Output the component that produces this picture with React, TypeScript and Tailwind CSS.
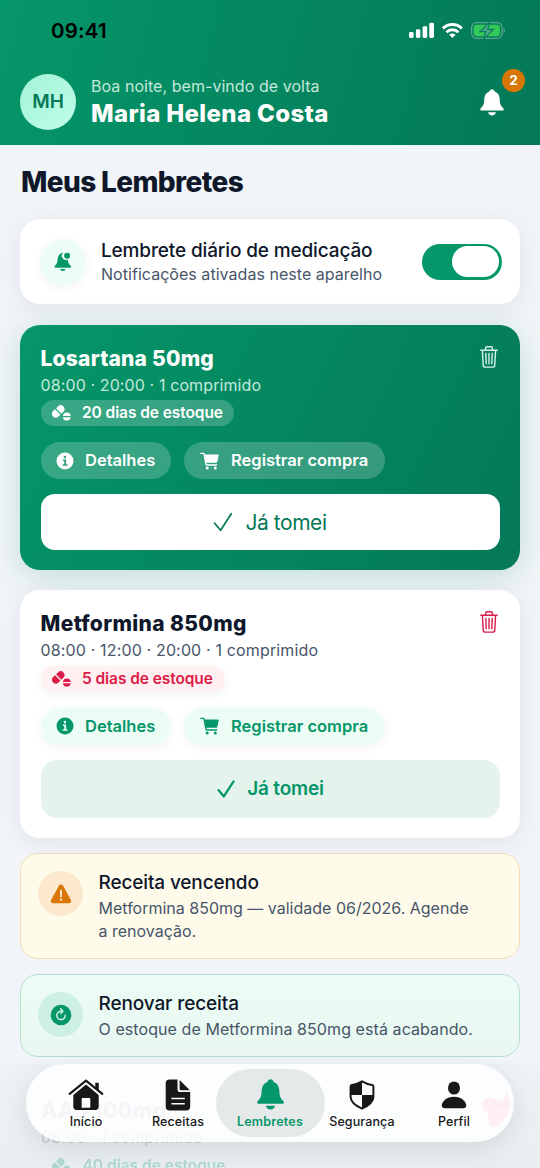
import React from "react";

type IconProps = { className?: string };

const Bell = ({ className }: IconProps) => (
  <svg viewBox="0 0 24 27" fill="currentColor" className={className}>
    <path d="M12 0.3c1.4 0 2.4 1 2.7 2.3 3.2 1.1 4.9 3.9 5 7.6.1 4.300.8 6.500 3.400 8.900 1.100 1.100.7 2.500-.9 2.500H1.800c-1.600 0-2-1.400-.9-2.500 2.600-2.400 3.300-4.600 3.400-8.900.1-3.700 1.800-6.500 5-7.600C9.600 1.300 10.600.3 12 .3z" />
    <path d="M8 23.300h8c-.5 1.900-2 3.200-4 3.200s-3.500-1.300-4-3.200z" />
  </svg>
);

const BellBadge = ({ className }: IconProps) => (
  <svg viewBox="0 0 18 19" fill="currentColor" className={className}>
    <path d="M9.300.7A4.100 4.100 0 0 0 13.800 7.500c.3 3 .8 4.500 2.900 6.300.9.9.6 1.900-.6 1.900H1.600c-1.200 0-1.500-1-.6-1.900C3 12 3.400 10.400 3.600 7.600 3.800 4 5.500 1.200 9.300.7z" />
    <path d="M6 17h5.600c-.4 1.200-1.400 2-2.800 2S6.400 18.200 6 17z" />
    <circle cx="13.100" cy="3.700" r="3" />
  </svg>
);

const Trash = ({ className }: IconProps) => (
  <svg viewBox="0 0 18 22" fill="none" stroke="currentColor" strokeWidth="1.400" strokeLinecap="round" strokeLinejoin="round" className={className}>
    <path d="M.8 4.200h16.400M5.600 4V2.300C5.600 1.300 6.200.8 7.100.8h3.800c.9 0 1.500.5 1.500 1.500V4M2.400 4.400l.8 14.700c.1 1.300.8 2 2 2h7.600c1.200 0 1.900-.7 2-2l.8-14.700M9 7.400v10.400M5.800 7.400l.4 10.400M12.200 7.400l-.4 10.400" />
  </svg>
);

const SoftTrash = ({ className }: IconProps) => (
  <svg viewBox="0 0 32 40" fill="currentColor" className={className}>
    <path d="M1 12C4 6 11 6 15 10c3-1 5 0 8-1 1-3 2-6 3-7 1 3 4 8 4 13-1 9-6 16-14 22-4 0-8-1-8-5 0-6-2-9-6-13-1-2-2-4-1-7z" fillOpacity="0.600" />
    <path d="M4 12c4-2 8-1 10 1M16 14c2 4 6 4 8 0M22 12l4-2" fill="none" stroke="currentColor" strokeWidth="2" />
  </svg>
);

const Pills = ({ className }: IconProps) => (
  <svg viewBox="0 0 20 16" fill="currentColor" className={className}>
    <g transform="rotate(-44 6.200 6.500)">
      <path d="M5.600 2.700v7.600H2.900a3.800 3.800 0 0 1 0-7.600z" />
      <path d="M6.900 2.700h2.700a3.800 3.800 0 0 1 0 7.600H6.900z" />
    </g>
    <path d="M10.900 10.900a4 4 0 0 1 7.900 0zM10.900 12.200h7.900a4 4 0 0 1-7.900 0z" />
  </svg>
);

const Info = ({ className, dot }: IconProps & { dot: string }) => (
  <svg viewBox="0 0 18 18" className={className}>
    <circle cx="9" cy="9" r="8.500" fill="currentColor" />
    <circle cx="8.900" cy="5.100" r="1.300" className={dot} />
    <path d="M6.900 7.500h3.200v4.700h1.400v1.500H6.600v-1.500h1.600V9H6.900z" className={dot} />
  </svg>
);

const Cart = ({ className }: IconProps) => (
  <svg viewBox="0 0 20 18" className={className} fill="none" stroke="currentColor" strokeLinecap="round" strokeLinejoin="round">
    <path d="M5 3h13.200l-1.500 7.200H6.300z" fill="currentColor" strokeWidth="1" />
    <path d="M.9 1.400h2.300c.5 0 .8.300.9.700L6 12.300c.1.500.4.700.9.700h9.700" strokeWidth="1.400" />
    <circle cx="7.200" cy="16" r="1.500" fill="currentColor" stroke="none" />
    <circle cx="15.300" cy="16" r="1.500" fill="currentColor" stroke="none" />
  </svg>
);

const Check = ({ className, weight }: IconProps & { weight: number }) => (
  <svg viewBox="0 0 20 20" fill="none" stroke="currentColor" strokeWidth={weight} strokeLinecap="round" strokeLinejoin="round" className={className}>
    <path d="M1.700 11.200L7.600 18.300 18.300 1.700" />
  </svg>
);

const Warning = ({ className }: IconProps) => (
  <svg viewBox="0 0 22 20" className={className}>
    <path d="M8.900 1.800c.9-1.700 3.300-1.700 4.200 0l7.800 14.100c.9 1.600-.2 3.400-2 3.400H3.100c-1.800 0-2.900-1.800-2-3.400z" fill="currentColor" />
    <path d="M11 6.600v6" stroke="#fbe8cd" strokeWidth="1.900" strokeLinecap="round" />
    <circle cx="11" cy="15.600" r="1.200" fill="#fbe8cd" />
  </svg>
);

const Renew = ({ className }: IconProps) => (
  <svg viewBox="0 0 22 22" className={className}>
    <circle cx="11" cy="11" r="10.300" fill="currentColor" />
    <path d="M15.200 11.200a4.200 4.200 0 1 1-4.200-4h1.200" stroke="#cdf0e3" strokeWidth="1.500" fill="none" strokeLinecap="round" />
    <path d="M10.700 4.900l2.300 2.300-2.300 2.400" stroke="#cdf0e3" strokeWidth="1.500" fill="none" strokeLinecap="round" strokeLinejoin="round" />
  </svg>
);

const House = ({ className }: IconProps) => (
  <svg viewBox="0 0 36 32" fill="currentColor" className={className}>
    <path d="M27.300 4.300c0-.4.200-.6.600-.6h2.300c.4 0 .6.200.6.600v8.500l-3.500-2.900z" />
    <path d="M1.700 14.800L18 1.600l16.300 13.200" fill="none" stroke="currentColor" strokeWidth="2.200" strokeLinecap="round" strokeLinejoin="round" />
    <path fillRule="evenodd" d="M18 5.500l12.700 10.400v11.700c0 2.200-1.200 3.400-3.400 3.400H8.700c-2.200 0-3.400-1.200-3.400-3.400V15.900zM14.600 18.900a.9.900 0 0 0-.9.900v8.900h8.600v-8.900a.9.900 0 0 0-.9-.9z" />
  </svg>
);

const Doc = ({ className }: IconProps) => (
  <svg viewBox="0 0 26 32" fill="currentColor" className={className}>
    <path fillRule="evenodd" d="M4.500.5h8v9.700c0 1.900.9 2.800 2.800 2.800h9.900v14.500c0 2.600-1.300 4-4 4H4.700C2 31.500.7 30.100.7 27.500V4.500C.7 1.900 2 .5 4.500.5zM6.400 18.700v1.600h13.400v-1.600zM6.400 23.900v1.600h13.400v-1.600z" />
    <path d="M14.600.9l10.300 10.300h-9.200c-.8 0-1.100-.3-1.100-1.100z" />
  </svg>
);

const Shield = ({ className }: IconProps) => (
  <svg viewBox="0 0 26 30" className={className}>
    <path d="M13 1.400c3.300 2 6.600 3.100 10.100 3.500.8.100 1.300.6 1.300 1.500v10.500c0 5.200-5.500 8.900-11.400 11.800C7.100 25.800 1.600 22.100 1.600 16.900V6.400c0-.9.500-1.400 1.300-1.500C6.400 4.500 9.700 3.400 13 1.400z" fill="none" stroke="currentColor" strokeWidth="2" />
    <path d="M13 1.400V15H1.600V6.400c0-.9.500-1.400 1.300-1.500C6.400 4.500 9.700 3.400 13 1.400zM13 15h11.400v1.900c0 5.200-5.500 8.900-11.400 11.800z" fill="currentColor" />
  </svg>
);

const Person = ({ className }: IconProps) => (
  <svg viewBox="0 0 26 28" fill="currentColor" className={className}>
    <ellipse cx="13" cy="7" rx="6" ry="6.600" />
    <path d="M3.800 27.200c-1.900 0-3.100-1-3.100-2.600 0-3.700 4.700-8.900 12.300-8.900s12.300 5.200 12.300 8.900c0 1.600-1.200 2.600-3.100 2.600z" />
  </svg>
);

const StatusIcons = () => (
  <svg viewBox="0 0 98 20" className="h-5 w-[98px]" fill="#fff">
    <rect x="0" y="12" width="4.600" height="6" rx="1.400" />
    <rect x="6.900" y="9.300" width="4.400" height="8.700" rx="1.400" />
    <rect x="13.600" y="6.200" width="4.600" height="11.800" rx="1.400" />
    <rect x="20.300" y="2.800" width="4.700" height="15.200" rx="1.400" />
    <g fill="none" stroke="#fff" strokeWidth="2.900">
      <path d="M33.900 8.400a13.600 13.600 0 0 1 19 0" />
      <path d="M37.400 12.200a8.600 8.600 0 0 1 12 0" />
    </g>
    <path d="M43.400 18l-3.200-3.300a4.600 4.600 0 0 1 6.400 0z" />
    <rect x="62.600" y="2.700" width="30.400" height="15.600" rx="5" fill="none" stroke="#5aa98b" strokeWidth="1.300" />
    <rect x="64.700" y="4.800" width="26.200" height="11.400" rx="3.300" fill="#34c759" />
    <path d="M94.500 8.200c1.900.6 1.900 4 0 4.600z" fill="#5aa98b" />
    <path d="M80.700 1.900L71 11.700h5.600l-1.900 7.400 9.700-9.800h-5.600z" fill="#4fa386" stroke="#05805c" strokeWidth="1.200" />
  </svg>
);

type MedCardProps = {
  name: string;
  schedule: string;
  stock: string;
  variant: "solid" | "plain";
};

function MedCard({ name, schedule, stock, variant }: MedCardProps) {
  const solid = variant === "solid";
  return (
    <section
      className={
        solid
          ? "h-[245.500px] rounded-[20px] bg-linear-[116deg] from-[#059669] to-[#047857] px-[20.500px] text-white shadow-[0_6px_32px_rgba(5,120,87,0.200)]"
          : "h-[247.500px] rounded-[20px] bg-white px-[20.500px] text-[#0f172a] shadow-[0_5px_24px_rgba(15,23,42,0.070)]"
      }
    >
      <div className="flex items-start justify-between">
        <div className="pt-5">
          <h2 className={solid ? "h-[27px] text-[21px] leading-7 font-extrabold tracking-[0.220px]" : "h-[27px] text-[21px] leading-7 font-extrabold tracking-[0.360px]"}>{name}</h2>
          <p className={solid ? "h-[26px] text-base leading-[27px] tracking-[0.110px] text-[#c4e9dc]" : "h-[26px] text-base leading-[27px] tracking-[0.150px] text-[#475569]"}>{schedule}</p>
        </div>
        <Trash className={solid ? "mt-[21px] mr-0.5 h-[22px] w-[18px] text-[#d2f3e7]" : "mt-[20.500px] mr-0.5 h-[22px] w-[18px] text-[#dc1c48]"} />
      </div>
      <div
        className={
          solid
            ? "mt-[2.500px] flex h-[26px] w-[193px] items-center gap-[10.500px] rounded-full bg-white/20 pl-[11px]"
            : "mt-[3px] flex h-[26px] w-[184px] items-center gap-[10.500px] rounded-full bg-[#fff1f2] pl-[11px] text-[#dc1c48] shadow-[0_3px_12px_rgba(15,23,42,0.050)]"
        }
      >
        <Pills className="h-4 w-5" />
        <span className="text-[15.500px] font-semibold tracking-[-0.080px]">{stock}</span>
      </div>
      <div className={solid ? "mt-4 flex gap-[13px]" : "mt-[15.500px] flex gap-[13px] text-[#059669]"}>
        {[
          { label: "Detalhes", icon: "info" },
          { label: "Registrar compra", icon: "cart" },
        ].map((b) => (
          <button
            key={b.label}
            className={`flex h-[37px] items-center rounded-full text-[16.500px] font-semibold ${
              b.icon === "info" ? "w-[130.500px] gap-[11px] pl-[15.500px]" : "w-[201px] gap-[11px] pl-4"
            } ${solid ? "bg-white/20" : "bg-[#ecfdf5] shadow-[0_3px_12px_rgba(15,23,42,0.050)]"}`}
          >
            {b.icon === "info" ? (
              <Info className="h-[18px] w-[18px]" dot={solid ? "fill-[#389f7e]" : "fill-[#ecfdf5]"} />
            ) : (
              <Cart className="h-[18px] w-5" />
            )}
            <span className="whitespace-nowrap">{b.label}</span>
          </button>
        ))}
      </div>
      <button
        className={
          solid
            ? "mt-[15px] flex h-14 w-full items-center justify-center gap-3 rounded-[14px] bg-white text-[21px] tracking-[-0.450px] text-[#047857]"
            : "mt-[15px] flex h-[58px] w-full items-center justify-center gap-3 rounded-2xl bg-[#e5f3ed] pt-px pl-px text-[19px] font-semibold tracking-[-0.200px] text-[#059669]"
        }
      >
        <Check className={solid ? "h-5 w-5" : "h-[18px] w-[18px]"} weight={solid ? 1.7 : 2.5} />
        <span className={solid ? "pt-px" : ""}>Já tomei</span>
      </button>
    </section>
  );
}

const tabs = [
  { label: "Início", icon: <House className="h-8 w-9" /> },
  { label: "Receitas", icon: <Doc className="h-8 w-[26px]" /> },
  { label: "Lembretes", icon: <Bell className="h-[31px] w-[29px]" />, active: true },
  { label: "Segurança", icon: <Shield className="h-[30px] w-[26px]" /> },
  { label: "Perfil", icon: <Person className="h-7 w-[26px]" /> },
];

export default function App() {
  return (
    <div className="relative h-[1168px] w-[540px] overflow-hidden bg-[#f1f5f9] font-['Inter',sans-serif]">
      <header className="h-[145px] bg-linear-[105deg] from-[#059669] to-[#047857]">
        <div className="flex h-[61px] justify-between pt-5 pr-[33px] pl-[51px]">
          <span className="text-[20.500px] leading-[22px] font-semibold tracking-[0.200px] text-black">09:41</span>
          <StatusIcons />
        </div>
        <div className="relative flex pt-[13px] pl-5">
          <div className="flex h-14 w-14 items-center justify-center rounded-full bg-linear-[135deg] from-[#a2f3d6] to-[#bffdea] text-[19px] font-semibold text-[#047857]">MH</div>
          <div className="ml-[15px]">
            <p className="text-[16px] leading-6 tracking-[0.050px] text-[#c4e9dc]">Boa noite, bem-vindo de volta</p>
            <p className="pt-px text-[24px] leading-[30px] font-extrabold tracking-[0.360px] text-white">Maria Helena Costa</p>
          </div>
          <Bell className="mt-[15px] mr-9 ml-auto h-[27px] w-6 text-white" />
          <span className="absolute top-2 right-[15px] flex h-[23px] w-[23px] items-center justify-center rounded-full bg-[#d97706] pt-px text-[13px] font-bold text-white">2</span>
        </div>
      </header>

      <main className="flex flex-col px-5">
        <h1 className="mt-[18px] h-14 pl-px text-[28px] leading-[38px] font-extrabold tracking-[-0.620px] text-[#0f172a]">Meus Lembretes</h1>

        <section className="flex h-[85px] items-center rounded-[20px] bg-white pr-[18px] pl-5 shadow-[0_5px_24px_rgba(15,23,42,0.070)]">
          <div className="flex h-[46px] w-[46px] items-center justify-center rounded-full bg-[#ecfdf5] shadow-[0_3px_12px_rgba(15,23,42,0.050)]">
            <BellBadge className="h-[19px] w-[18px] text-[#059669]" />
          </div>
          <div className="ml-[15px] pt-0.5">
            <p className="text-[19px] leading-6 font-medium tracking-[-0.140px] text-[#0f172a]">Lembrete diário de medicação</p>
            <p className="text-[16px] leading-[23px] tracking-[0.040px] text-[#475569]">Notificações ativadas neste aparelho</p>
          </div>
          <div className="ml-auto flex h-9 w-20 items-center justify-end rounded-full bg-[#059669] pr-[3px]">
            <div className="h-[31px] w-[47px] rounded-full bg-white" />
          </div>
        </section>

        <div className="mt-[20.500px]">
          <MedCard name="Losartana 50mg" schedule="08:00 · 20:00 · 1 comprimido" stock="20 dias de estoque" variant="solid" />
        </div>
        <div className="mt-5">
          <MedCard name="Metformina 850mg" schedule="08:00 · 12:00 · 20:00 · 1 comprimido" stock="5 dias de estoque" variant="plain" />
        </div>

        <section className="mt-[15.500px] flex h-[106px] rounded-[18px] border border-[#f3dcb3] bg-[#fffbeb] pt-[17px] pl-[17px]">
          <div className="flex h-[45px] w-[45px] items-center justify-center rounded-full bg-[#fbe8cd]">
            <Warning className="h-5 w-[22px] text-[#d97706]" />
          </div>
          <div className="ml-[15.500px]">
            <p className="text-[19px] leading-6 font-medium tracking-[-0.140px] text-[#0f172a]">Receita vencendo</p>
            <p className="mt-0.5 text-[16px] leading-[23px] text-[#475569]">
              Metformina 850mg — validade 06/2026. Agende
              <br />a renovação.
            </p>
          </div>
        </section>

        <section className="mt-[15px] flex h-[83px] rounded-[18px] border border-[#b4e0d0] bg-linear-to-b from-[#ecfdf5] to-[#e9f7f0] pt-[17px] pl-[17px]">
          <div className="flex h-[45px] w-[45px] items-center justify-center rounded-full bg-[#cdf0e3]">
            <Renew className="h-[22px] w-[22px] text-[#059669]" />
          </div>
          <div className="ml-[15.500px]">
            <p className="text-[19px] leading-6 font-medium tracking-[-0.120px] text-[#0f172a]">Renovar receita</p>
            <p className="mt-0.5 text-[16px] leading-[23px] tracking-[0.080px] text-[#475569]">O estoque de Metformina 850mg está acabando.</p>
          </div>
        </section>

        <section className="-mx-5 mt-[7px] flex h-[108px] justify-between bg-linear-to-b from-[#eef2f6] to-[#e9eff1] pt-[33px] pr-[27px] pl-[41px]">
          <div className="opacity-25">
            <h2 className="h-[27px] text-[21px] leading-7 font-extrabold tracking-[0.400px] text-[#1e2f6b]">AAS 100mg</h2>
            <p className="h-[26px] text-base leading-[27px] tracking-[0.110px] text-[#475569]">08:00 · 1 comprimido</p>
            <div className="mt-[3px] flex h-[26px] w-[193px] items-center gap-[10.500px] rounded-full pl-[11px] text-[#059669]">
              <Pills className="h-4 w-5" />
              <span className="text-[15.500px] font-semibold">40 dias de estoque</span>
            </div>
          </div>
          <SoftTrash className="-mt-[7px] h-10 w-8 text-[#ff4d84] opacity-90 blur-[0.500px]" />
        </section>
      </main>

      <nav className="absolute top-[1063.500px] left-[26px] flex h-[78px] w-[488px] items-center justify-center rounded-full bg-white/85 shadow-[0_8px_28px_rgba(15,23,42,0.100)]">
        {tabs.map((t) => (
          <div
            key={t.label}
            className={
              t.active
                ? "-mx-[8.500px] flex h-[68px] w-[109px] flex-col items-center justify-end rounded-full bg-[#e6e9ea] pb-2 text-[#059669]"
                : "flex h-[68px] w-[92px] flex-col items-center justify-end pb-2 text-[#18181b]"
            }
          >
            <div className="flex h-8 items-center">{t.icon}</div>
            <span className={t.active ? "mt-[3px] text-[12.500px] leading-[15px] font-semibold tracking-[0.200px]" : "mt-[3px] text-[12.500px] leading-[15px] font-medium tracking-[0.120px]"}>{t.label}</span>
          </div>
        ))}
      </nav>
    </div>
  );
}
